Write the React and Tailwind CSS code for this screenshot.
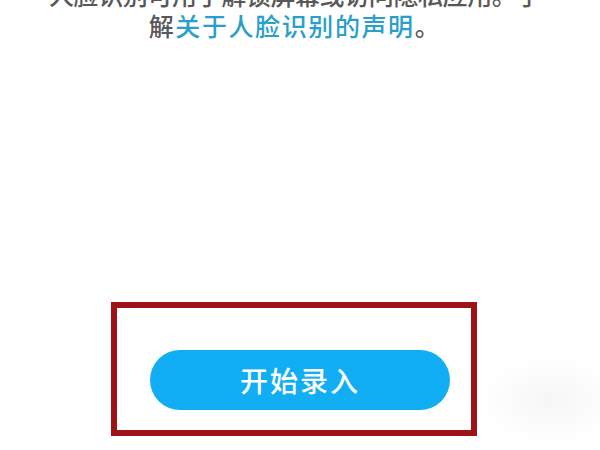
import React from 'react'

const App = () => {
  return (
    <div
      className="w-[600px] h-[450px] overflow-hidden bg-white bg-[radial-gradient(ellipse_70px_45px_at_550px_400px,#f6f6f8_0%,#ffffff_100%)]"
      style={{ fontFamily: '"Noto Sans CJK SC", "Noto Sans", sans-serif' }}
    >
      {/* Description text, top line is cut off by the crop */}
      <div className="mt-[-21px] ml-[45px] w-[500px] text-center text-[25px] leading-[31px] font-medium text-[#585858]">
        <div className="tracking-[-0.4px] whitespace-nowrap">人脸识别可用于解锁屏幕或访问隐私应用。了</div>
        <div className="tracking-[1.6px] whitespace-nowrap">
          解<span className="text-[#2a9fcb]">关于人脸识别的声明</span>。
        </div>
      </div>

      {/* Highlight box round the button */}
      <div className="mt-[261px] ml-[111px] w-[366px] h-[134px] border-[6px] border-[#9d1318] pl-[33px] pt-[42px]">
        <button className="w-[300px] h-[60px] rounded-full bg-[#12aef4] text-white text-[28px] font-medium leading-none tracking-[2px] flex items-center justify-center">
          开始录入
        </button>
      </div>
    </div>
  )
}

export default App
